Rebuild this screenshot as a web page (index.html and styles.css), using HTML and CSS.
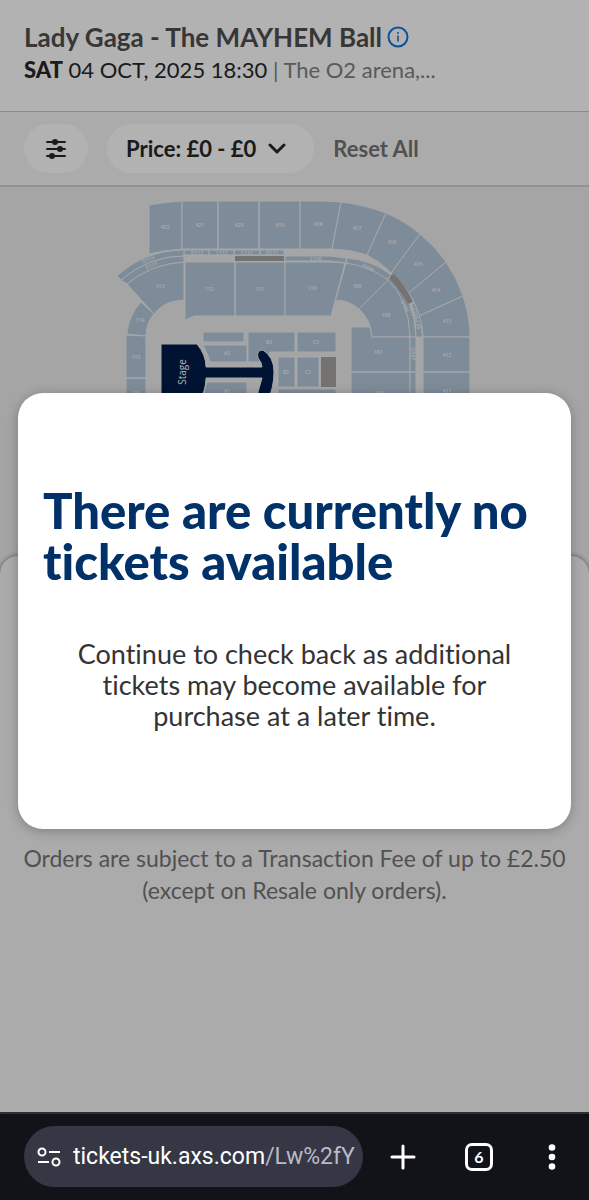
FILE: index.html
```html
<!DOCTYPE html>
<html lang="en">
<head>
<meta charset="utf-8">
<meta name="viewport" content="width=device-width, initial-scale=1">
<title>Lady Gaga - The MAYHEM Ball</title>
<link rel="stylesheet" href="styles.css">
</head>
<body>
<div class="page">
  <header class="event">
    <div class="event-title">
      <h1>Lady Gaga - The MAYHEM Ball</h1>
      <button class="info" type="button" aria-label="Event information">
        <svg viewBox="0 0 22 22" width="22" height="22" fill="none" stroke="currentColor" stroke-width="2"><circle cx="11" cy="11" r="9.500"/><path d="M11 9.500v6" stroke-width="1.600"/><circle cx="11" cy="7" r="1" fill="currentColor" stroke="none"/></svg>
      </button>
    </div>
    <p class="event-date"><b>SAT</b> 04 OCT, 2025 18:30 <span class="venue">| The O2 arena,...</span></p>
  </header>

  <nav class="filters">
    <button class="chip chip-icon" type="button" aria-label="Filters">
      <svg viewBox="0 0 20 20" width="20" height="20" fill="none" stroke="currentColor" stroke-width="2" stroke-linecap="round"><path d="M1 3h18M1 10h18M1 17h18"/><g fill="currentColor" stroke="none"><circle cx="9" cy="3" r="3"/><circle cx="14" cy="10" r="3"/><circle cx="6" cy="17" r="3"/></g></svg>
    </button>
    <button class="chip chip-price" type="button">Price: £0 - £0
      <svg viewBox="0 0 18 12" width="18" height="12" fill="none" stroke="currentColor" stroke-width="3" stroke-linecap="round" stroke-linejoin="round"><path d="M2 2l7 7 7-7"/></svg>
    </button>
    <button class="reset" type="button">Reset All</button>
  </nav>

  <main class="content">
    <svg class="seat-map" viewBox="0 187 589 369" role="img" aria-label="Seating map">
      <g class="block">
        <path d="M149 205Q165 202 182 201V249Q165 250 149 254Z"/>
        <path d="M182 201H218V249H182ZM218 201H259V249H218ZM259 201H300V249H259Z"/>
        <path d="M300 201H325L341 202L332 249H300Z"/>
        <path d="M341 202Q365 205 386 213L367 255Q350 249 332 249Z"/>
        <path d="M386 213Q405 221 420 234L391 273Q381 262 367 255Z"/>
        <path d="M420 234Q435 246 446 262L409 293Q402 282 391 273Z"/>
        <path d="M446 262Q457 278 463 296L419 316Q416 304 409 293Z"/>
        <path d="M463 296Q470 316 470 337H423Q423 326 419 316Z"/>
        <path d="M423 337H470V372H423ZM423 372H470V408H423Z"/>
        <path d="M184 250H209V255H184ZM209 250H234V255H209ZM234 250H260V255H234ZM260 250H284V255H260Z"/>
        <path d="M285 256H330L346 258V263L330 261H285Z"/>
        <path d="M347 258Q372 260 391 275L387 280Q369 267 346 263Z"/>
        <path d="M391 275Q415 301 416 337H410Q409 301 387 280Z"/>
        <path d="M412 304L414 303Q423 319 422 337H416Q416 321 412 304Z"/>
        <path d="M184 250Q145 250 117 276L121 280Q149 256 184 256Z"/>
        <path d="M184 256Q149 256 121 280L127 284Q151 264 184 262Z"/>
        <path d="M184 262Q151 264 127 284L154 314Q165 300 184 300Z"/>
        <path d="M185 262H235V316H194L185 320ZM235 262H285V316H235Z"/>
        <path d="M285 262H330L345 263L331 316H285Z"/>
        <path d="M346 263Q372 267 388 280L359 309Q350 301 337 300L335 302Z"/>
        <path d="M388 280Q409 300 410 337H372Q371 320 359 309Z"/>
        <path d="M351 327H370L372 337H410V372H351ZM351 372H410V408H351Z"/>
        <path d="M410 337H416V372H410ZM410 372H416V408H410Z"/>
        <path d="M141 302L154 314Q146 323 146 336L127 334Q128 316 141 302Z"/>
        <path d="M126 335L146 336V378H126ZM126 378H146V408H126Z"/>
        <path d="M203 332H244V342H203Z"/>
        <path d="M203 345H247V362H210Q208 354 203 345Z"/>
        <path d="M207 382H247V408H200Z"/>
        <path d="M248 332H295V352H270L262 362H248Z"/>
        <path d="M297 332H336V352H297ZM278 357H295V387H278ZM297 357H319V387H297ZM278 389H336V408H278Z"/>
      </g>
      <g class="block-off">
        <path d="M235 256H284V261H235ZM391 275L394 274Q406 286 413 302L408 304Q401 291 390 279Z"/>
        <path d="M321 357H336V387H321Z"/>
      </g>
      <path class="stage" d="M161 344H197Q206 355 206 367H262Q262 363 258 358Q256 350 263 350Q274 357 274 372Q274 388 267 402Q256 402 258 392L262 378H206Q206 390 199 402H161Z"/>
      <text class="stage-name" transform="translate(186 372) rotate(-90)">Stage</text>
      <g class="labels">
        <text x="165" y="229">422</text><text x="200" y="227">421</text><text x="239" y="227">420</text><text x="280" y="227">419</text><text x="318" y="226">418</text><text x="357" y="230">417</text><text x="392" y="244">416</text><text x="418" y="266">415</text><text x="436" y="292">414</text><text x="447" y="323">413</text><text x="447" y="357">412</text><text x="447" y="393">411</text>
        <text x="160" y="288">113</text><text x="209" y="291">112</text><text x="260" y="291">111</text><text x="312" y="290">110</text><text x="357" y="288">109</text><text x="386" y="317">108</text><text x="378" y="354">107</text><text x="379" y="395">106</text><text x="140" y="322">114</text><text x="136" y="359">115</text><text x="136" y="395">116</text>
        <text x="197" y="255">D112</text><text x="222" y="255">L112</text><text x="247" y="255">L111</text><text x="272" y="255">D111</text><text x="316" y="261">L110</text>
        <text transform="translate(367 269) rotate(25)">D109</text><text transform="translate(403 307) rotate(63)">D108</text><text transform="translate(415 319) rotate(77)">L108/L08</text><text transform="translate(411 354) rotate(90)">D107</text><text transform="translate(149 261) rotate(-25)">D113</text><text transform="translate(152 267) rotate(-25)">D113</text>
        <text x="227" y="355">A3</text><text x="227" y="393">A1</text><text x="269" y="344">B3</text><text x="316" y="344">C3</text><text x="286" y="374">B2</text><text x="308" y="374">C2</text>
      </g>
    </svg>
    <section class="sheet">
      <p>Orders are subject to a Transaction Fee of up to £2.50 (except on Resale only orders).</p>
    </section>
  </main>

  <div class="overlay">
    <div class="modal" role="dialog" aria-modal="true" aria-labelledby="modal-title">
      <h2 id="modal-title">There are currently no tickets available</h2>
      <p>Continue to check back as additional tickets may become available for purchase at a later time.</p>
    </div>
  </div>
</div>

<footer class="browser-bar">
  <button class="address" type="button">
    <svg viewBox="0 0 24 20" width="24" height="20" fill="none" stroke="currentColor" stroke-width="2"><circle cx="5" cy="5" r="3.500"/><path d="M12 5h11M1 15h11"/><circle cx="19" cy="15" r="3.500"/></svg>
    <span class="url">tickets-uk.axs.com<span class="url-path">/Lw%2fY</span></span>
  </button>
  <button class="bar-button" type="button" aria-label="New tab">
    <svg viewBox="0 0 26 26" width="26" height="26" fill="none" stroke="currentColor" stroke-width="3" stroke-linecap="round"><path d="M13 2v22M2 13h22"/></svg>
  </button>
  <button class="bar-button" type="button" aria-label="Switch tabs"><span class="tab-count">6</span></button>
  <button class="bar-button" type="button" aria-label="More options">
    <svg viewBox="0 0 26 26" width="26" height="26" fill="currentColor"><circle cx="13" cy="3.500" r="3.300"/><circle cx="13" cy="13" r="3.300"/><circle cx="13" cy="22.500" r="3.300"/></svg>
  </button>
</footer>
</body>
</html>
```
FILE: styles.css
```css
* { box-sizing: border-box; }
body {
  margin: 0;
  min-height: 100vh;
  display: flex;
  flex-direction: column;
  font-family: Lato, "Noto Sans", sans-serif;
  font-variant-ligatures: none;
  color: #282828;
}
h1, h2, p { margin: 0; }
button {
  border: 0;
  padding: 0;
  background: none;
  color: inherit;
  font: inherit;
}
svg { display: block; flex: none; }

.page {
  position: relative;
  flex: 1;
  display: flex;
  flex-direction: column;
}
.event {
  padding: 20px 24px 25px;
  background: #fff;
  border-bottom: 1px solid #c8c8c8;
}
.event-title { display: flex; align-items: center; gap: 5px; }
.event-title h1 {
  font-size: 26px;
  line-height: 34px;
  font-weight: 700;
  color: #505050;
}
.info { color: #0e77e0; }
.event-date {
  font-size: 22px;
  line-height: 32px;
  white-space: nowrap;
}
.event-date b { font-weight: 900; }
.venue { color: #818181; }

.filters {
  display: flex;
  align-items: center;
  gap: 19px;
  padding: 12px 24px;
  background: #f5f5f5;
  border-bottom: 2px solid #d0d0d0;
  font-size: 22px;
  font-weight: 700;
}
.chip {
  display: flex;
  align-items: center;
  justify-content: center;
  height: 49px;
  border-radius: 25px;
  background: #fff;
}
.chip-icon { width: 64px; }
.chip-price { gap: 12px; padding: 0 28px 0 19px; }
.reset { color: #757575; }

.content {
  flex: 1;
  display: flex;
  flex-direction: column;
  background: #ededed;
}
.seat-map { width: 100%; }
.block { fill: #b5c9db; stroke: #ebeff3; stroke-width: 1; }
.block-off { fill: #a8a5a2; }
.stage { fill: #001c49; stroke: #ebeff3; stroke-width: 1; }
.stage-name {
  fill: #fff;
  font: 10px "Open Sans", sans-serif;
  text-anchor: middle;
}
.labels {
  fill: #f2f6fa;
  font: 600 5px "Open Sans", sans-serif;
  text-anchor: middle;
}
.sheet {
  flex: 1;
  padding: 286px 20px 24px;
  border-radius: 18px 18px 0 0;
  background: #f5f5f5;
  box-shadow: 0 0 5px rgba(0, 0, 0, .5);
  font-size: 23px;
  line-height: 32px;
  text-align: center;
  color: #757575;
}

.overlay {
  position: absolute;
  inset: 0;
  padding: 393px 18px 0;
  background: rgba(0, 0, 0, .3);
}
.modal {
  padding: 92px 25px 98px;
  border-radius: 25px;
  background: #fff;
  box-shadow: 0 2px 12px rgba(0, 0, 0, .25);
}
.modal h2 {
  font-size: 49px;
  line-height: 51px;
  font-weight: 900;
  color: #003168;
}
.modal p {
  padding: 0 32px;
  margin-top: 51px;
  font-size: 27px;
  line-height: 31px;
  text-align: center;
  color: #333;
}

.browser-bar {
  display: flex;
  align-items: center;
  gap: 24px;
  padding: 12px 24px 13px;
  border-top: 2px solid #38393e;
  background: #121318;
  color: #fff;
}
.address {
  flex: 1;
  min-width: 0;
  display: flex;
  align-items: center;
  gap: 12px;
  height: 61px;
  padding: 0 8px 0 13px;
  border-radius: 31px;
  background: #353745;
}
.url {
  flex: 1;
  overflow: hidden;
  font: 23px/32px Roboto, sans-serif;
  text-align: left;
  white-space: nowrap;
}
.url-path { color: #b9bac8; }
.bar-button {
  width: 32px;
  height: 48px;
  display: flex;
  align-items: center;
  justify-content: center;
}
.bar-button + .bar-button { margin-left: 20px; }
.bar-button:last-child { margin-left: 17px; margin-right: -3px; }
.tab-count {
  width: 28px;
  height: 28px;
  border: 3px solid currentColor;
  border-radius: 7px;
  font: 700 16px/22px Lato, sans-serif;
  text-align: center;
}
```
